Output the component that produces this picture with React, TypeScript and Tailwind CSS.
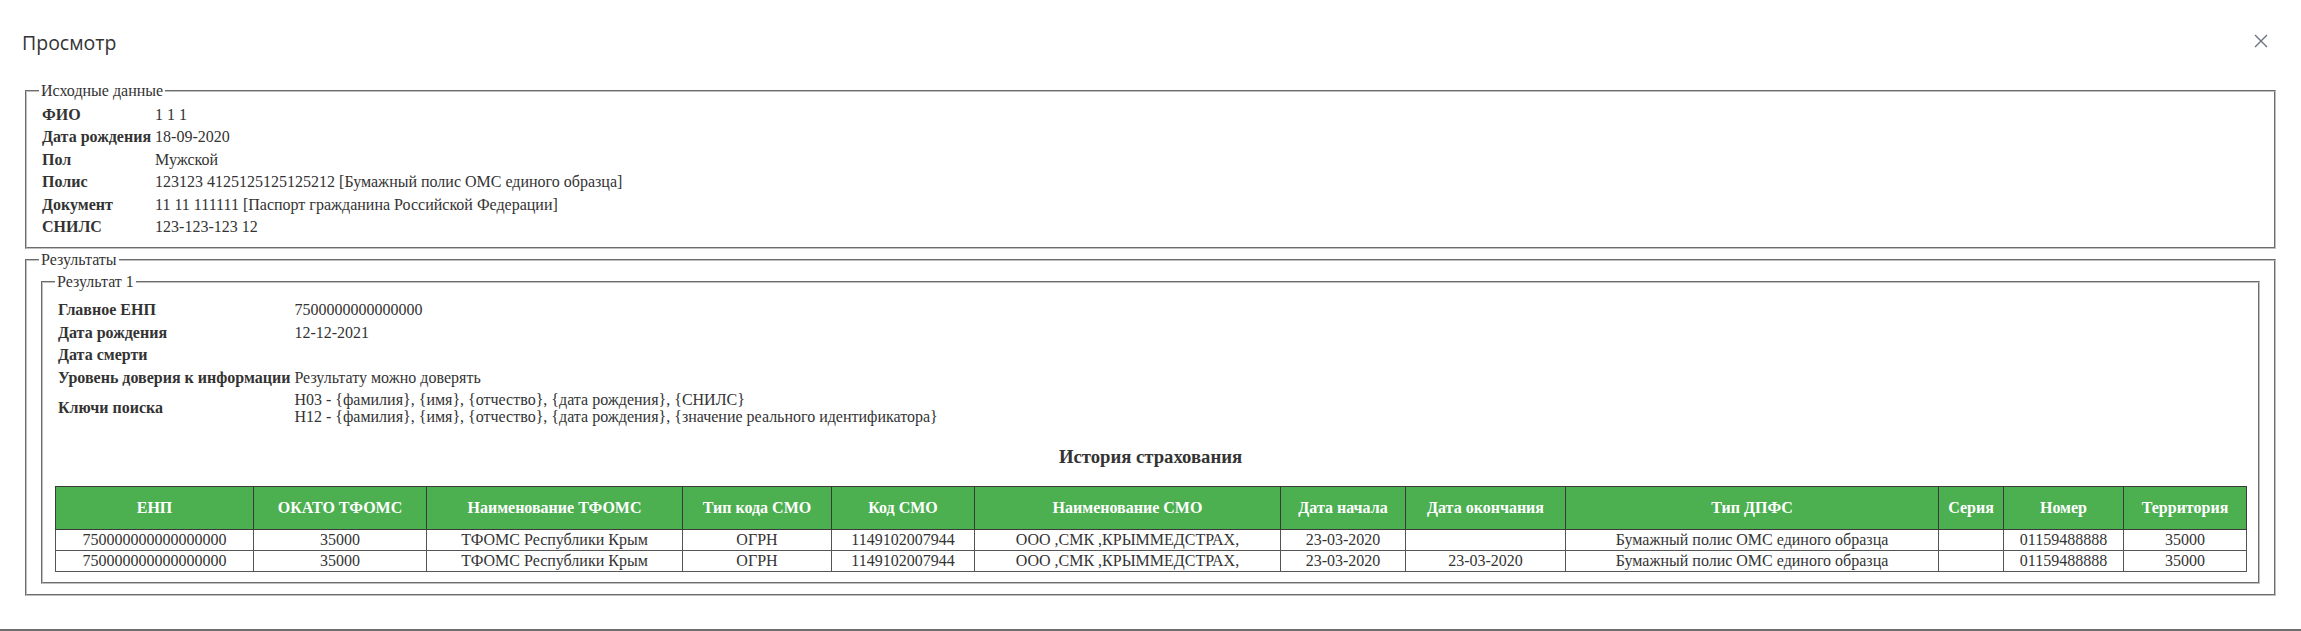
import React from "react";

const srcRows: [string, string][] = [
  ["ФИО", "1 1 1"],
  ["Дата рождения", "18-09-2020"],
  ["Пол", "Мужской"],
  ["Полис", "123123 4125125125125212 [Бумажный полис ОМС единого образца]"],
  ["Документ", "11 11 111111 [Паспорт гражданина Российской Федерации]"],
  ["СНИЛС", "123-123-123 12"],
];

const cols: { h: string; w: string }[] = [
  { h: "ЕНП", w: "w-[198px]" },
  { h: "ОКАТО ТФОМС", w: "w-[173px]" },
  { h: "Наименование ТФОМС", w: "w-[256px]" },
  { h: "Тип кода СМО", w: "w-[149px]" },
  { h: "Код СМО", w: "w-[143px]" },
  { h: "Наименование СМО", w: "w-[306px]" },
  { h: "Дата начала", w: "w-[125px]" },
  { h: "Дата окончания", w: "w-[160px]" },
  { h: "Тип ДПФС", w: "w-[373px]" },
  { h: "Серия", w: "w-[65px]" },
  { h: "Номер", w: "w-[120px]" },
  { h: "Территория", w: "w-[123px]" },
];

const histRows: string[][] = [
  [
    "750000000000000000",
    "35000",
    "ТФОМС Республики Крым",
    "ОГРН",
    "1149102007944",
    "ООО ,СМК ,КРЫММЕДСТРАХ,",
    "23-03-2020",
    "",
    "Бумажный полис ОМС единого образца",
    "",
    "01159488888",
    "35000",
  ],
  [
    "750000000000000000",
    "35000",
    "ТФОМС Республики Крым",
    "ОГРН",
    "1149102007944",
    "ООО ,СМК ,КРЫММЕДСТРАХ,",
    "23-03-2020",
    "23-03-2020",
    "Бумажный полис ОМС единого образца",
    "",
    "01159488888",
    "35000",
  ],
];

const fs =
  "min-w-0 border-2 [border-style:groove] border-[#c0c0c0] px-[12px]";
const lg = "px-[2px] text-[16px] leading-[18px]";

export default function App() {
  return (
    <div className="w-full h-[631px] flex flex-col bg-white text-[#333] font-['Liberation_Serif',serif]">
      <div className="flex-1 flex flex-col">
        <div className="flex items-start justify-between pl-[22px] pr-[33px] pt-[30px] h-[82px]">
          <div className="font-['Open_Sans',sans-serif] text-[19.5px] leading-[26px] text-[#333]">
            Просмотр
          </div>
          <svg
            width="14"
            height="14"
            viewBox="0 0 14 14"
            className="mt-[4px]"
            fill="none"
            stroke="#6b7280"
            strokeWidth="1.4"
          >
            <path d="M1 1L13 13M13 1L1 13" />
          </svg>
        </div>

        <div className="px-[25px]">
          <fieldset className={`${fs} pt-[3px] pb-[8px]`}>
            <legend className={lg}>Исходные данные</legend>
            <table className="border-separate border-spacing-[2px] text-[16px] leading-[18.4px]">
              <tbody>
                {srcRows.map(([k, v]) => (
                  <tr key={k}>
                    <td className="p-[1px] font-bold whitespace-nowrap">{k}</td>
                    <td className="p-[1px] whitespace-nowrap">{v}</td>
                  </tr>
                ))}
              </tbody>
            </table>
          </fieldset>

          <fieldset className={`${fs} mt-[2px] pt-[4px] pb-[10px]`}>
            <legend className={lg}>Результаты</legend>
            <fieldset className={`${fs} mx-[2px] pt-[7px] pb-[10px]`}>
              <legend className={lg}>Результат 1</legend>
              <table className="border-separate border-spacing-[2px] text-[16px] leading-[18.4px]">
                <tbody>
                  <tr>
                    <td className="p-[1px] font-bold whitespace-nowrap">Главное ЕНП</td>
                    <td className="p-[1px]">7500000000000000</td>
                  </tr>
                  <tr>
                    <td className="p-[1px] font-bold whitespace-nowrap">Дата рождения</td>
                    <td className="p-[1px]">12-12-2021</td>
                  </tr>
                  <tr>
                    <td className="p-[1px] font-bold whitespace-nowrap">Дата смерти</td>
                    <td className="p-[1px]"></td>
                  </tr>
                  <tr>
                    <td className="p-[1px] font-bold whitespace-nowrap">
                      Уровень доверия к информации
                    </td>
                    <td className="p-[1px]">Результату можно доверять</td>
                  </tr>
                  <tr>
                    <td className="p-[1px] font-bold whitespace-nowrap align-middle">
                      Ключи поиска
                    </td>
                    <td className="p-[1px] leading-[17px]">
                      <div>Н03 - {"{фамилия}, {имя}, {отчество}, {дата рождения}, {СНИЛС}"}</div>
                      <div>
                        Н12 -{" "}
                        {"{фамилия}, {имя}, {отчество}, {дата рождения}, {значение реального идентификатора}"}
                      </div>
                    </td>
                  </tr>
                </tbody>
              </table>

              <h3 className="text-center font-bold text-[18.72px] leading-[21.5px] mt-[18px] mb-[18px]">
                История страхования
              </h3>

              <table className="w-full table-fixed border-collapse text-[16px]">
                <colgroup>
                  {cols.map((c) => (
                    <col key={c.h} className={c.w} />
                  ))}
                </colgroup>
                <thead>
                  <tr>
                    {cols.map((c) => (
                      <th
                        key={c.h}
                        className="border border-[#3a3a3a] bg-[#4caf50] text-white font-bold text-center leading-[18px] py-[12px] px-[1px] whitespace-nowrap"
                      >
                        {c.h}
                      </th>
                    ))}
                  </tr>
                </thead>
                <tbody>
                  {histRows.map((r, i) => (
                    <tr key={i}>
                      {r.map((v, j) => (
                        <td
                          key={j}
                          className="border border-[#555] text-center leading-[18px] py-[1px] px-[1px] whitespace-nowrap"
                        >
                          {v}
                        </td>
                      ))}
                    </tr>
                  ))}
                </tbody>
              </table>
            </fieldset>
          </fieldset>
        </div>
      </div>
      <div className="h-[2px] bg-[#6e6e6e]" />
    </div>
  );
}
